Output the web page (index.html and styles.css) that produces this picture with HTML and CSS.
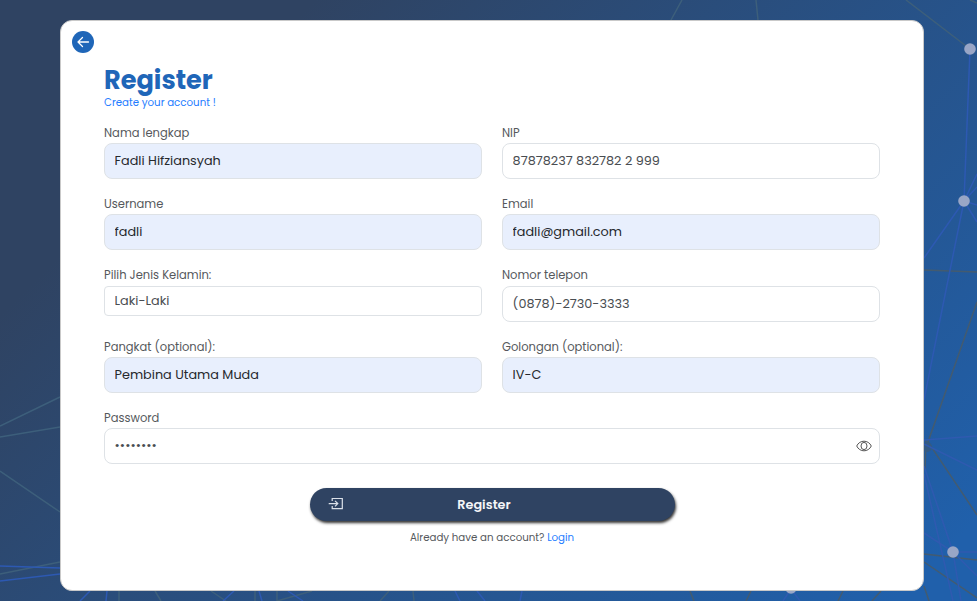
FILE: index.html
```html
<!DOCTYPE html>
<html lang="id">
<head>
<meta charset="utf-8">
<title>Register</title>
<link rel="stylesheet" href="styles.css">
</head>
<body>
<svg class="network" viewBox="0 0 977 601" aria-hidden="true">
  <g class="faint">
    <path d="M0 426L60 397M0 437L60 427M0 471L60 512M0 574L60 562"/>
    <path d="M682 0L671 20M756 0L758 20M906 0L970 49M970 0L977 3"/>
    <path d="M119 591V601M155 591L161 601M211 591L226 601M255 591V601M277 591V601M277 601L312 591M389 591L380 601M413 591L414 601"/>
  </g>
  <g class="grey">
    <path d="M924 270L977 272M977 302L928 442L977 515M924 554L977 560M924 562L977 598M924 586L929 601M926 440L925 470M690 591L694 601M751 591L746 601M843 591L838 601M881 591L872 601"/>
    <circle cx="927" cy="447" r="5"/>
  </g>
  <g class="blue">
    <path d="M0 566L60 568M0 581L60 574M90 591L80 601M107 591L106 601M234 591L223 601M259 591L262 601M288 591L303 601M455 591L460 601M477 591L485 601M522 591L520 601"/>
    <path d="M970 49L964 201L924 258M964 201L977 174M964 201L977 187M964 201L977 205M964 201L977 222M964 201L944 300L924 400"/>
  </g>
  <g class="violet">
    <path d="M924 440L977 436M924 444L977 470M924 466L953 552L961 601M924 474L953 601M924 533L953 552H977M953 552L977 576M791 589L783 601M791 589L800 601"/>
  </g>
  <g class="nodes"><circle cx="970" cy="49" r="5.8"/><circle cx="964" cy="201" r="5.8"/><circle cx="953" cy="552" r="5.8"/><circle cx="791" cy="588" r="5.8"/></g>
</svg>
<main class="card">
  <a class="back" href="#" aria-label="Back"><svg viewBox="0 0 22 22"><path d="M16.5 11H6M10.5 6.5L6 11L10.5 15.5"/></svg></a>
  <h1>Register</h1>
  <p class="subtitle">Create your account !</p>
  <form>
    <div class="grid">
      <div class="field"><label for="nama">Nama lengkap</label><input class="filled" id="nama" value="Fadli Hifziansyah"></div>
      <div class="field"><label for="nip">NIP</label><input id="nip" value="87878237 832782 2 999"></div>
      <div class="field"><label for="user">Username</label><input class="filled" id="user" value="fadli"></div>
      <div class="field"><label for="email">Email</label><input class="filled" id="email" value="fadli@gmail.com"></div>
      <div class="field spaced"><label for="jenis">Pilih Jenis Kelamin:</label><input class="short" id="jenis" value="Laki-Laki"></div>
      <div class="field spaced"><label for="telp">Nomor telepon</label><input id="telp" value="(0878)-2730-3333"></div>
      <div class="field"><label for="pangkat">Pangkat (optional):</label><input class="filled" id="pangkat" value="Pembina Utama Muda"></div>
      <div class="field"><label for="gol">Golongan (optional):</label><input class="filled" id="gol" value="IV-C"></div>
      <div class="field wide"><label for="pass">Password</label>
        <div class="password"><input id="pass" type="password" value="password">
          <svg class="eye" viewBox="0 0 16 12"><path d="M.7 6C3.6-.4 12.4-.4 15.3 6C12.4 12.4 3.6 12.4.7 6Z"/><ellipse cx="8" cy="6" rx="3" ry="3.6"/></svg></div></div>
    </div>
    <button class="submit" type="button">
      <svg viewBox="0 0 16 14"><path d="M4.2 4V1.5H14.3V11.6H4.2V9M.7 6.6H9.5M7 3.8L9.8 6.6L7 9.4"/></svg>
      <span>Register</span>
    </button>
  </form>
  <p class="login">Already have an account? <a href="#">Login</a></p>
</main>
</body>
</html>
```
FILE: styles.css
```css
* { box-sizing: border-box; }
body {
  margin: 0;
  width: 977px;
  height: 601px;
  padding: 20px 53px 10px 60px;
  overflow: hidden;
  font-family: Poppins, Inter, sans-serif;
  color: #55585c;
  background: linear-gradient(135deg, #2f4362 20%, #2060ab 95%);
}
.network { position: absolute; inset: 0; width: 977px; height: 601px; fill: none; stroke-width: 1.5; }
.faint { stroke: #3d5f7b; }
.grey { stroke: #435b70; }
.grey circle { fill: #345a83; stroke: none; }
.blue { stroke: #2d59b2; }
.violet { stroke: #2f5ab0; }
.nodes { fill: #99a6c6; }
.card {
  position: relative;
  width: 864px;
  height: 571px;
  padding: 44px 43px 0;
  background: #fff;
  border: 1px solid #c9c9c9;
  border-radius: 12px;
}
.back { position: absolute; left: 11px; top: 10px; width: 22px; height: 22px; border-radius: 50%; background: #1f66b8; }
.back svg { display: block; fill: none; stroke: #fff; stroke-width: 1.3; stroke-linecap: round; stroke-linejoin: round; }
h1 { margin: 0 0 1px; font-size: 25.6px; line-height: 30px; font-weight: 700; color: #1f66b8; }
.subtitle { margin: 0 0 14px; font-size: 10.24px; line-height: 13px; color: #247cff; }
h1, .subtitle, .login { white-space: nowrap; }
.grid { display: grid; grid-template-columns: 378px 378px; gap: 15px 20px; }
.field { display: flex; flex-direction: column; }
.wide { grid-column: 1 / -1; }
label { align-self: flex-start; font-size: 11.52px; line-height: 20px; }
.spaced label { margin-bottom: 1px; }
input {
  width: 100%;
  height: 36px;
  padding: 0 9.6px;
  border: 1px solid #dee2e6;
  border-radius: 8px;
  background: #fff;
  color: #494d51;
  font: 400 12.8px Poppins, Inter, sans-serif;
}
.filled { background: #e8effd; color: #26292d; }
.short { height: 30px; border-radius: 4px; }
.password { display: flex; position: relative; }
.eye { position: absolute; right: 8px; top: 12px; width: 16px; height: 12px; fill: none; stroke: #555; stroke-width: 1; }
.submit {
  display: grid;
  grid-template-columns: 16px 1fr 33px;
  align-items: center;
  width: 365px;
  height: 33px;
  margin: 24px 0 0 206px;
  padding: 0 18px;
  border: 0;
  border-radius: 17px;
  background: #2f4362;
  color: #f5f6f8;
  box-shadow: 1px 2px 3px #333;
  font: 600 12.8px Poppins, Inter, sans-serif;
}
.submit svg { width: 16px; height: 14px; margin-top: -2px; fill: none; stroke: #dce1e9; stroke-width: 1.2; }
.login { margin: 9px 0 0; text-align: center; font-size: 10.24px; line-height: 16px; }
a { color: #247cff; text-decoration: none; }
```
